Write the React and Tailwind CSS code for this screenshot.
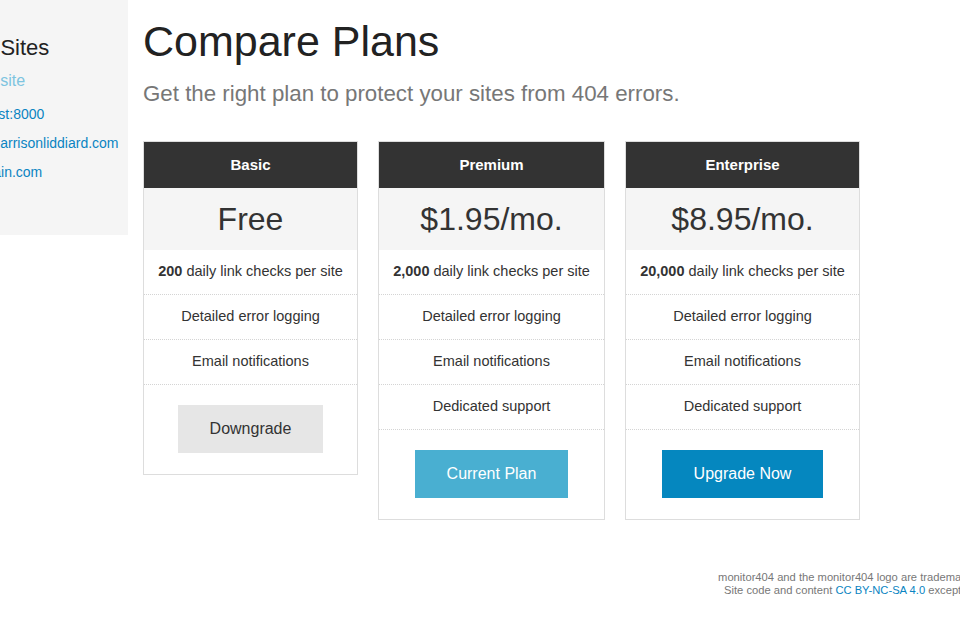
import React from "react";

const plans = [
  {
    name: "Basic",
    price: "Free",
    checks: "200",
    width: "w-[215px]",
    support: false,
    button: "Downgrade",
    btnClass: "bg-[#e6e6e6] text-[#333]",
  },
  {
    name: "Premium",
    price: "$1.95/mo.",
    checks: "2,000",
    width: "w-[227px]",
    support: true,
    button: "Current Plan",
    btnClass: "bg-[#49afd1] text-white",
  },
  {
    name: "Enterprise",
    price: "$8.95/mo.",
    checks: "20,000",
    width: "w-[235px]",
    support: true,
    button: "Upgrade Now",
    btnClass: "bg-[#0587bf] text-white",
  },
];

const Feature = ({ children }) => (
  <div className="h-[45px] flex items-center justify-center border-b border-dotted border-[#d4d4d4] text-[14.5px] text-[#333]">
    {children}
  </div>
);

const PlanCard = ({ plan }) => (
  <div className={`${plan.width} border border-[#ddd] bg-white`}>
    {/* header */}
    <div className="h-[46px] bg-[#333] text-white flex items-center justify-center text-[15px] font-bold">
      {plan.name}
    </div>
    <div className="h-[62px] bg-[#f5f5f5] flex items-center justify-center text-[32px] text-[#333]">
      {plan.price}
    </div>
    <Feature>
      <span>
        <b>{plan.checks}</b> daily link checks per site
      </span>
    </Feature>
    <Feature>Detailed error logging</Feature>
    <Feature>Email notifications</Feature>
    {plan.support && <Feature>Dedicated support</Feature>}
    <div className="flex justify-center pt-[20px] pb-[21px]">
      <button
        className={`${plan.btnClass} h-[48px] px-8 text-[16px] leading-[20px] cursor-pointer`}
      >
        {plan.button}
      </button>
    </div>
  </div>
);

const App = () => {
  return (
    <div
      className="w-[960px] h-[640px] overflow-hidden bg-white"
      style={{ fontFamily: '"Liberation Sans", Arial, sans-serif' }}
    >
      <div className="flex items-start -ml-[46px] w-[1126px]">
        {/* sidebar =========== */}
        <div className="w-[174px] h-[235px] bg-[#f5f5f5] shrink-0 pt-[35px]">
          <h2 className="ml-[11px] text-[22px] leading-[26px] text-[#222] whitespace-nowrap">
            My Sites
          </h2>
          <div className="mt-[9px] text-[16px] leading-[22px] text-[#7dc4e0] whitespace-nowrap">
            Add a site
          </div>
          <ul className="mt-[8px] text-[14px] leading-[29px] text-[#0a84c2] whitespace-nowrap">
            <li className="ml-0">localhost:8000</li>
            <li className="ml-[5px]">www.harrisonliddiard.com</li>
            <li className="ml-[12px]">domain.com</li>
          </ul>
        </div>
        {/* sidebar =========== */}

        {/* main =========== */}
        <div className="flex-1 pl-[15px] pt-[17px]">
          <h1 className="text-[43px] leading-[48px] text-[#222]">
            Compare Plans
          </h1>
          <p className="mt-[15px] text-[22.3px] leading-[28px] text-[#777]">
            Get the right plan to protect your sites from 404 errors.
          </p>

          <div className="flex items-start gap-[20px] mt-[33px] text-center">
            {plans.map((plan) => (
              <PlanCard key={plan.name} plan={plan} />
            ))}
          </div>

          <footer className="mt-[51px] text-right text-[11.2px] leading-[13px] text-[#777] whitespace-nowrap">
            <p>
              monitor404 and the monitor404 logo are trademarks of Harrison
              Liddiard.
            </p>
            <p>
              Site code and content{" "}
              <a className="text-[#0a84c2]">CC BY-NC-SA 4.0</a> except where
              otherwise noted.
            </p>
          </footer>
        </div>
      </div>
    </div>
  );
};

export default App;
